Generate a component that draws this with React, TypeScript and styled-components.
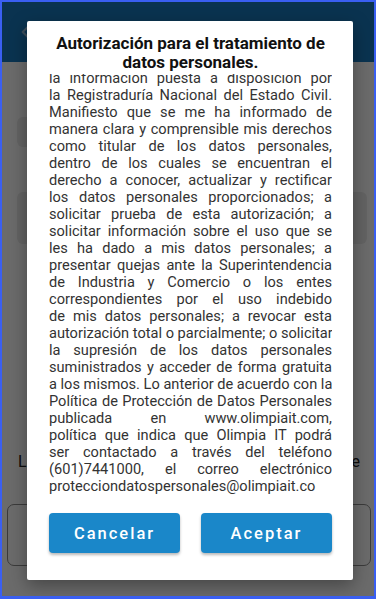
import React, { useLayoutEffect, useRef } from 'react';
import styled, { createGlobalStyle } from 'styled-components';

const GlobalStyle = createGlobalStyle`
  html, body {
    margin: 0;
    padding: 0;
    background: #ffffff;
  }
  body {
    font-family: Roboto, "Noto Sans", "Liberation Sans", sans-serif;
  }
  * {
    box-sizing: border-box;
  }
`;

const Frame = styled.div`
  position: relative;
  width: 376px;
  height: 599px;
  border: 2px solid #3a5ff2;
  border-bottom-width: 3px;
  overflow: hidden;
  background: #ffffff;
  display: flex;
  flex-direction: column;
`;

const AppBar = styled.header`
  height: 60px;
  flex-shrink: 0;
  background: #1a7abf;
  display: flex;
  align-items: center;
  padding-left: 14px;
`;

const Screen = styled.main`
  flex: 1;
  display: flex;
  flex-direction: column;
  padding: 0 3px 0 5px;
`;

const Card = styled.div<{ $top: number; $height: number; $width?: string }>`
  margin: ${(p) => p.$top}px 0 0 10px;
  height: ${(p) => p.$height}px;
  width: ${(p) => p.$width ?? 'calc(100% - 14px)'};
  background: #ebebeb;
  border-radius: 6px;
`;

const Label = styled.p`
  margin: 208px 11px 0 11px;
  font-size: 16px;
  line-height: 20px;
  color: #222222;
  text-align: justify;
  text-align-last: justify;
`;

const InputBox = styled.div`
  margin-top: 32px;
  height: 62px;
  border: 1px solid #8c8c8c;
  border-radius: 7px;
`;

const Overlay = styled.div`
  position: absolute;
  inset: 0;
  background: rgba(0, 0, 0, 0.58);
  display: flex;
  justify-content: center;
  align-items: flex-start;
  padding-left: 4px;
`;

const Dialog = styled.section`
  margin-top: 19px;
  width: 326px;
  height: 559px;
  background: #ffffff;
  border-radius: 2px;
  display: flex;
  flex-direction: column;
  padding: 13px 21px 0 22px;
  box-shadow: 0 6px 18px rgba(0, 0, 0, 0.35);
`;

const Title = styled.h2`
  margin: 0 0 2px;
  font-size: 17px;
  font-weight: 700;
  line-height: 19px;
  color: #111111;
  text-align: center;
`;

const Body = styled.div`
  height: 423px;
  flex-shrink: 0;
  overflow-y: auto;
  scrollbar-width: none;
  &::-webkit-scrollbar {
    display: none;
  }
`;

const Line = styled.span<{ $last?: boolean }>`
  display: block;
  font-size: 14.6px;
  line-height: 17px;
  color: #333333;
  text-align: justify;
  text-align-last: ${(p) => (p.$last ? 'left' : 'justify')};
  white-space: nowrap;
`;

const Actions = styled.div`
  margin-top: 16px;
  display: flex;
  justify-content: space-between;
`;

const ActionButton = styled.button`
  width: 131px;
  height: 40px;
  border: none;
  border-radius: 4px;
  background: #1a87c9;
  color: #ffffff;
  font-family: Roboto, "Noto Sans", sans-serif;
  font-size: 16.5px;
  font-weight: 500;
  letter-spacing: 2px;
  box-shadow: 0 2px 3px rgba(0, 0, 0, 0.28);
  cursor: pointer;
`;

const lines = [
  'la información puesta a disposición por',
  'la Registraduría Nacional del Estado Civil.',
  'Manifiesto que se me ha informado de',
  'manera clara y comprensible mis derechos',
  'como titular de los datos personales,',
  'dentro de los cuales se encuentran el',
  'derecho a conocer, actualizar y rectificar',
  'los datos personales proporcionados; a',
  'solicitar prueba de esta autorización; a',
  'solicitar información sobre el uso que se',
  'les ha dado a mis datos personales; a',
  'presentar quejas ante la Superintendencia',
  'de Industria y Comercio o los entes',
  'correspondientes por el uso indebido',
  'de mis datos personales; a revocar esta',
  'autorización total o parcialmente; o solicitar',
  'la supresión de los datos personales',
  'suministrados y acceder de forma gratuita',
  'a los mismos. Lo anterior de acuerdo con la',
  'Política de Protección de Datos Personales',
  'publicada en www.olimpiait.com,',
  'política que indica que Olimpia IT podrá',
  'ser contactado a través del teléfono',
  '(601)7441000, el correo electrónico',
  'protecciondatospersonales@olimpiait.co',
];

const BackIcon = () => (
  <svg width="20" height="20" viewBox="0 0 24 24" fill="none">
    <path
      d="M15 5l-7 7 7 7"
      stroke="#8fb8d8"
      strokeWidth="2.5"
      strokeLinecap="round"
      strokeLinejoin="round"
    />
  </svg>
);

export default function App() {
  const bodyRef = useRef<HTMLDivElement>(null);

  useLayoutEffect(() => {
    // the text has been scrolled a little past its first lines
    if (bodyRef.current) bodyRef.current.scrollTop = 4;
  }, []);

  return (
    <>
      <GlobalStyle />
      <Frame>
        <AppBar>
          <BackIcon />
        </AppBar>
        <Screen>
          <Card $top={55} $height={30} $width="120px" />
          <Card $top={45} $height={52} />
          <Label>La firma electrónica requiere que usted acepte</Label>
          <InputBox />
        </Screen>
        <Overlay>
          <Dialog role="dialog" aria-modal="true">
            <Title>Autorización para el tratamiento de datos personales.</Title>
            <Body ref={bodyRef}>
              {lines.map((text, i) => (
                <Line key={i} $last={i === lines.length - 1}>
                  {text}
                </Line>
              ))}
              <Line $last>{'\u00a0'}</Line>
            </Body>
            <Actions>
              <ActionButton>Cancelar</ActionButton>
              <ActionButton>Aceptar</ActionButton>
            </Actions>
          </Dialog>
        </Overlay>
      </Frame>
    </>
  );
}
